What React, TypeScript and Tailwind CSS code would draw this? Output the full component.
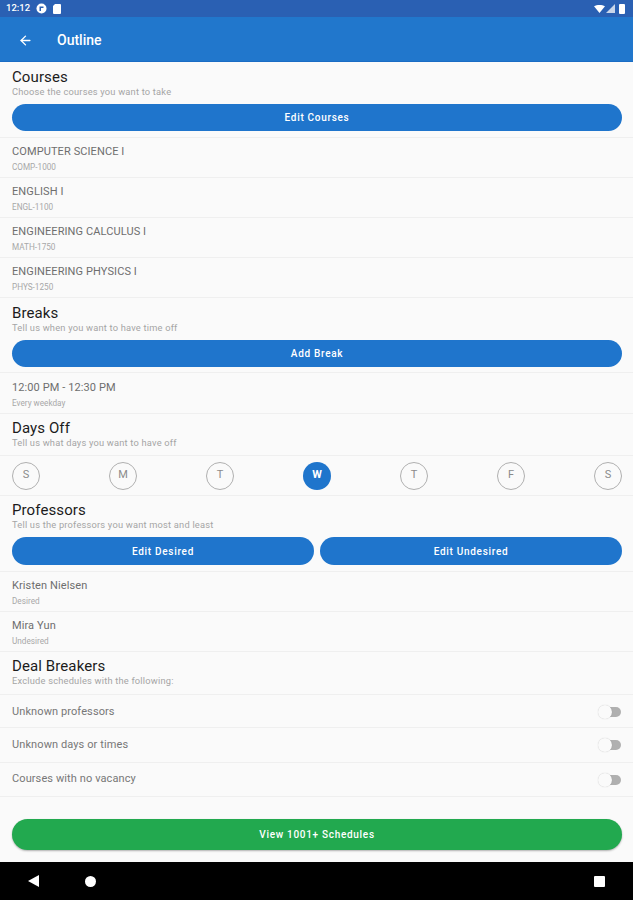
import { ArrowLeft } from 'lucide-react'

const font = { fontFamily: 'Roboto, sans-serif' }

function Section({ title, sub, h }: { title: string; sub: string; h: string }) {
  return (
    <div className={`px-3 flex flex-col justify-end ${h}`}>
      <div className="text-[15px] leading-[18px] text-[#1c1c1c] tracking-[0.1px]">{title}</div>
      <div className="text-[9.3px] leading-[12px] text-[#a5a5a5] tracking-[0.2px]">{sub}</div>
    </div>
  )
}

function Pill({ label, tall }: { label: string; tall?: boolean }) {
  return (
    <div className={`flex-1 ${tall ? 'h-[28px]' : 'h-[27px]'} rounded-full bg-[#1f75cc] flex items-center justify-center text-white text-[10px] font-medium tracking-[0.7px]`}>
      {label}
    </div>
  )
}

function Row({ title, sub, h = 'h-[40px]' }: { title: string; sub: string; h?: string }) {
  return (
    <div className={`${h} px-3 pt-[2px] border-b border-[#efefef] flex flex-col justify-center`}>
      <div className="text-[11px] leading-[14px] text-[#6e6e6e] tracking-[0.1px]">{title}</div>
      <div className="text-[8.2px] leading-[10px] mt-[3px] text-[#a8a8a8]">{sub}</div>
    </div>
  )
}

function Toggle({ label, h }: { label: string; h: string }) {
  return (
    <div className={`${h} pl-3 pr-3 border-b border-[#efefef] flex items-center justify-between`}>
      <span className="text-[11px] text-[#777777] tracking-[0.1px]">{label}</span>
      <div className="relative w-[22px] h-[10px] rounded-full bg-[#b0b0b0]">
        <div className="absolute left-[-1px] top-[-2px] w-[14px] h-[14px] rounded-full bg-[#fafafa] shadow-[0_0_1px_rgba(0,0,0,0.25)]" />
      </div>
    </div>
  )
}

function Day({ d, on }: { d: string; on?: boolean }) {
  return (
    <div
      className={
        on
          ? 'w-[28px] h-[28px] rounded-full bg-[#1f75cc] flex items-center justify-center text-white text-[11px] font-bold'
          : 'w-[28px] h-[28px] rounded-full border border-[#b0b0b0] flex items-center justify-center text-[#8a8a8a] text-[11px]'
      }
    >
      {d}
    </div>
  )
}

export default function App() {
  return (
    <div className="w-[633px] h-[900px] flex flex-col bg-[#fafafa] overflow-hidden" style={font}>
      {/* status bar */}
      <div className="h-[17px] bg-[#2a60b3] flex items-center justify-between pl-[6px] pr-[8px]">
        <div className="flex items-center gap-[6px]">
          <span className="text-white text-[9.5px] font-medium">12:12</span>
          <svg width="11" height="11" viewBox="0 0 11 11">
            <circle cx="5.5" cy="5.5" r="5" fill="#fff" />
            <path d="M3.5 3.5h4v1.5h-2.5v3h-1.5z" fill="#2a60b3" />
          </svg>
          <svg width="8" height="10" viewBox="0 0 8 10">
            <path d="M2 0h5a1 1 0 0 1 1 1v8a1 1 0 0 1-1 1H1a1 1 0 0 1-1-1V2z" fill="#fff" />
          </svg>
        </div>
        <div className="flex items-center gap-[1px]">
          <svg width="11" height="8" viewBox="0 0 11 8">
            <path d="M0 1.2C3-.4 8-.4 11 1.2L5.5 8z" fill="#fff" />
          </svg>
          <svg width="9" height="9" viewBox="0 0 9 9">
            <path d="M9 0v9H0z" fill="#c9d6ea" />
          </svg>
          <svg width="6" height="10" viewBox="0 0 6 10" className="ml-[3px]">
            <rect width="6" height="10" rx="1" fill="#fff" />
          </svg>
        </div>
      </div>

      {/* app bar */}
      <div className="h-[45px] bg-[#2177cc] border-b border-[#1a6cc4] flex items-center text-white pt-[2px]">
        <ArrowLeft size={15} strokeWidth={2.2} className="ml-[18px]" />
        <span className="ml-[24px] text-[14px] font-medium">Outline</span>
      </div>

      <div className="flex-1 flex flex-col">
        <Section title="Courses" sub="Choose the courses you want to take" h="h-[36px]" />
        <div className="pl-3 pr-[11px] pt-[6px] pb-[6px] border-b border-[#efefef] flex">
          <Pill label="Edit Courses" />
        </div>
        <Row title="COMPUTER SCIENCE I" sub="COMP-1000" />
        <Row title="ENGLISH I" sub="ENGL-1100" />
        <Row title="ENGINEERING CALCULUS I" sub="MATH-1750" />
        <Row title="ENGINEERING PHYSICS I" sub="PHYS-1250" />

        <Section title="Breaks" sub="Tell us when you want to have time off" h="h-[36px]" />
        <div className="pl-3 pr-[11px] pt-[6px] pb-[5px] border-b border-[#efefef] flex">
          <Pill label="Add Break" />
        </div>
        <Row title="12:00 PM - 12:30 PM" sub="Every weekday" h="h-[41px]" />

        <Section title="Days Off" sub="Tell us what days you want to have off" h="h-[35px]" />
        <div className="h-[41px] mt-[6px] pl-3 pr-[11px] border-y border-[#efefef] flex items-center justify-between">
          <Day d="S" />
          <Day d="M" />
          <Day d="T" />
          <Day d="W" on />
          <Day d="T" />
          <Day d="F" />
          <Day d="S" />
        </div>

        <Section title="Professors" sub="Tell us the professors you want most and least" h="h-[35px]" />
        <div className="pl-3 pr-[11px] pt-[6px] pb-[6px] border-b border-[#efefef] flex gap-[6px]">
          <Pill label="Edit Desired" tall />
          <Pill label="Edit Undesired" tall />
        </div>
        <Row title="Kristen Nielsen" sub="Desired" />
        <Row title="Mira Yun" sub="Undesired" />

        <Section title="Deal Breakers" sub="Exclude schedules with the following:" h="h-[35px]" />
        <div className="mt-[7px] border-t border-[#efefef]">
          <Toggle label="Unknown professors" h="h-[33px] pt-[2px]" />
          <Toggle label="Unknown days or times" h="h-[35px]" />
          <Toggle label="Courses with no vacancy" h="h-[34px]" />
        </div>

        <div className="pl-3 pr-[11px] mt-[22px] flex">
          <div className="flex-1 h-[31px] rounded-full bg-[#22a94f] shadow-[0_1px_2px_rgba(0,0,0,0.3)] flex items-center justify-center text-white text-[10px] font-medium tracking-[0.7px]">
            View 1001+ Schedules
          </div>
        </div>
      </div>

      {/* nav bar */}
      <div className="h-[38px] bg-black relative flex items-center">
        <svg width="11" height="12" viewBox="0 0 11 12" className="absolute left-[28px] top-[13px]">
          <path d="M11 0v12L0 6z" fill="#fff" />
        </svg>
        <div className="absolute left-[85px] top-[14px] w-[11px] h-[11px] rounded-full bg-white" />
        <div className="absolute left-[594px] top-[14px] w-[11px] h-[11px] rounded-[1px] bg-white" />
      </div>
    </div>
  )
}
